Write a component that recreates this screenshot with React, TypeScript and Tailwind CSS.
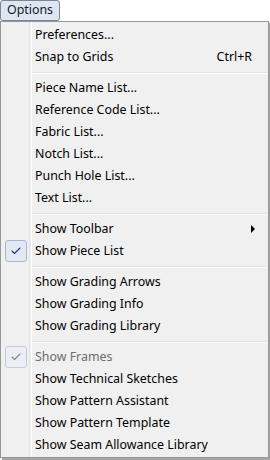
import { Check } from 'lucide-react';

type Item = {
  label: string;
  shortcut?: string;
  submenu?: boolean;
  checked?: boolean;
  disabled?: boolean;
};

const groups: Item[][] = [
  [{ label: 'Preferences...' }, { label: 'Snap to Grids', shortcut: 'Ctrl+R' }],
  [
    { label: 'Piece Name List...' },
    { label: 'Reference Code List...' },
    { label: 'Fabric List...' },
    { label: 'Notch List...' },
    { label: 'Punch Hole List...' },
    { label: 'Text List...' },
  ],
  [{ label: 'Show Toolbar', submenu: true }, { label: 'Show Piece List', checked: true }],
  [{ label: 'Show Grading Arrows' }, { label: 'Show Grading Info' }, { label: 'Show Grading Library' }],
  [
    { label: 'Show Frames', checked: true, disabled: true },
    { label: 'Show Technical Sketches' },
    { label: 'Show Pattern Assistant' },
    { label: 'Show Pattern Template' },
    { label: 'Show Seam Allowance Library' },
  ],
];

function MenuRow({ item }: { item: Item }) {
  return (
    <div className="flex h-[22px] items-center">
      <div className="flex w-[29px] shrink-0 items-center justify-center pl-[1px]">
        {item.checked && (
          <div
            className={`flex h-[22px] w-[22px] items-center justify-center rounded-[3px] border ${
              item.disabled ? 'border-[#c5cbd6] bg-[#eceef3]' : 'border-[#aab5cd] bg-[#e3e8f2]'
            }`}
          >
            <Check
              size={12}
              strokeWidth={2.2}
              className={item.disabled ? 'text-[#8a8a8a]' : 'text-[#1f37a6]'}
            />
          </div>
        )}
      </div>
      <span
        className={`ml-[5px] flex-1 whitespace-nowrap ${item.disabled ? 'text-[#6d6d6d]' : 'text-black'}`}
      >
        {item.label}
      </span>
      {item.shortcut && <span className="mr-[16px] whitespace-nowrap">{item.shortcut}</span>}
      {item.submenu && (
        <svg width="4" height="8" viewBox="0 0 4 8" className="mr-[13px]">
          <path d="M0 0 L4 4 L0 8 Z" fill="#000" />
        </svg>
      )}
    </div>
  );
}

export default function App() {
  return (
    <div
      className="relative h-[460px] w-[270px] bg-white text-[12.4px] leading-none"
      style={{ fontFamily: '"Noto Sans", "Open Sans", sans-serif' }}
    >
      {/* Menu bar button */}
      <div className="relative z-10 flex h-[21px] w-[60px] items-center justify-center rounded-[3px] border border-[#7a8596] bg-[#dfe6ef] text-[#0f1a33]">
        Options
      </div>

      {/* Dropdown */}
      <div className="relative w-[269px] shadow-[2px_2px_1px_rgba(0,0,0,0.35)]">
        <div className="relative border border-[#979797] bg-[#f0f0f0] pt-[2px] pb-[1px]">
          <div
            className="pointer-events-none absolute bottom-0 left-[28px] top-0 w-[2px] border-l border-[#e2e3e3]"
            style={{ boxShadow: '1px 0 0 #ffffff' }}
          />
          {groups.map((group, gi) => (
            <div key={gi}>
              {gi > 0 && (
                <div className="flex h-[9px] items-center pl-[29px] pr-[2px]">
                  <div className="h-[2px] w-full border-t border-b border-[#e0e0e0] border-b-white" />
                </div>
              )}
              {group.map((item) => (
                <MenuRow key={item.label} item={item} />
              ))}
            </div>
          ))}
        </div>
      </div>
    </div>
  );
}
